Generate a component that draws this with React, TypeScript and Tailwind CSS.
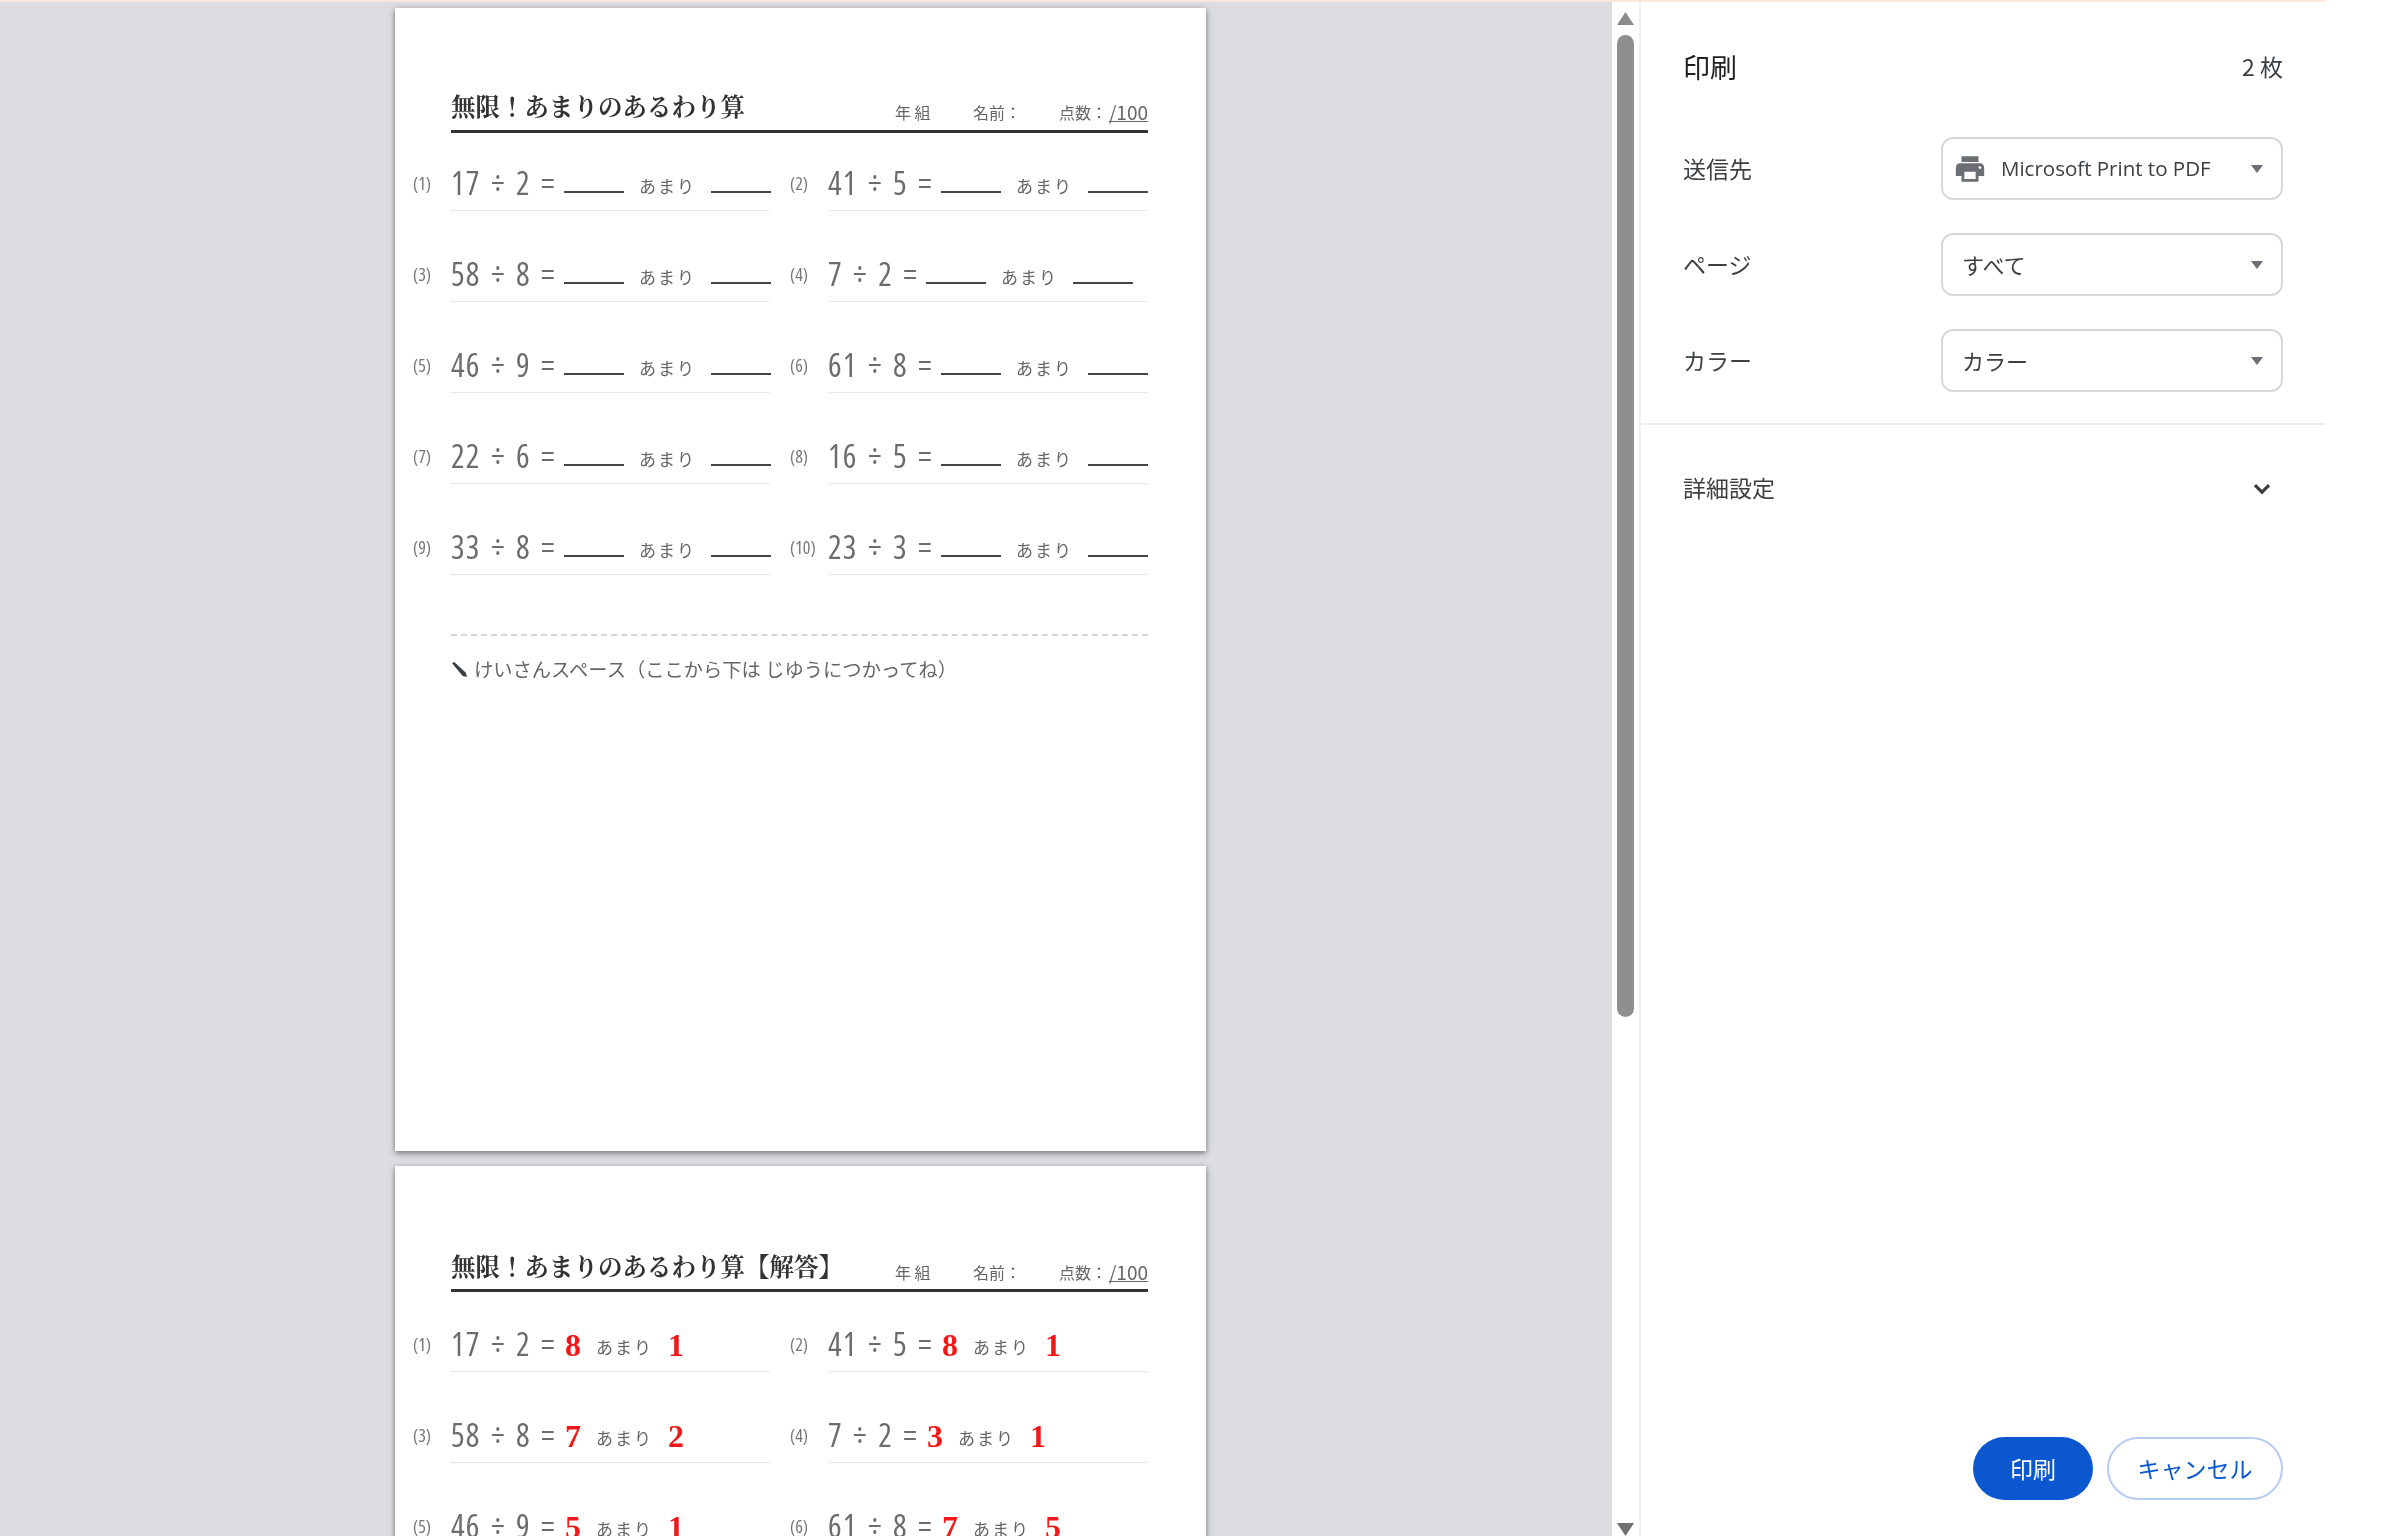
import React from 'react';

const problems = [
  { q: '17 ÷ 2 =', a: '8', r: '1' },
  { q: '41 ÷ 5 =', a: '8', r: '1' },
  { q: '58 ÷ 8 =', a: '7', r: '2' },
  { q: '7 ÷ 2 =', a: '3', r: '1' },
  { q: '46 ÷ 9 =', a: '5', r: '1' },
  { q: '61 ÷ 8 =', a: '7', r: '5' },
  { q: '22 ÷ 6 =', a: '3', r: '4' },
  { q: '16 ÷ 5 =', a: '3', r: '1' },
  { q: '33 ÷ 8 =', a: '4', r: '1' },
  { q: '23 ÷ 3 =', a: '7', r: '2' },
];

function Problem({ index, q, a, r, answers }: { index: number; q: string; a: string; r: string; answers: boolean }) {
  return (
    <div className="flex">
      <div className="w-[38px] pt-[13px] text-[18px] leading-[30px] text-[#777] font-['Open_Sans',sans-serif] font-stretch-condensed">
        ({index})
      </div>
      <div className="w-[319px] h-[56px] pt-[10px] flex items-baseline border-b border-dotted border-[#d4d4d4]">
        <span className="text-[32px] leading-[36px] text-[#6c6c6c] tracking-[1.25px] [word-spacing:3px] whitespace-nowrap font-['Open_Sans',sans-serif] font-stretch-condensed">
          {q}
        </span>
        {answers ? (
          <>
            <span className="ml-[9px] w-[16px] text-[32px] leading-[36px] font-bold text-[#f01818] font-['Liberation_Serif',serif]">{a}</span>
            <span className="ml-[15px] -translate-y-[2px] text-[17px] tracking-[2px] whitespace-nowrap text-[#666]">あまり</span>
            <span className="ml-[15px] text-[32px] leading-[36px] font-bold text-[#f01818] font-['Liberation_Serif',serif]">{r}</span>
          </>
        ) : (
          <>
            <span className="ml-[8px] -translate-y-[2px] inline-block w-[60px] h-0 shrink-0 border-b-2 border-[#444]"></span>
            <span className="ml-[15px] -translate-y-[2px] text-[17px] tracking-[2px] whitespace-nowrap text-[#666]">あまり</span>
            <span className="ml-[15px] -translate-y-[2px] inline-block w-[60px] h-0 shrink-0 border-b-2 border-[#444]"></span>
          </>
        )}
      </div>
    </div>
  );
}

function Page({ title, answers }: { title: string; answers: boolean }) {
  return (
    <div className={answers ? "w-[811px] h-[1143px] shrink-0 bg-white pl-[18px] pt-[81px] shadow-[0_2px_6px_rgba(0,0,0,0.5)]" : "w-[811px] h-[1143px] shrink-0 bg-white pl-[18px] pt-[80px] shadow-[0_2px_6px_rgba(0,0,0,0.5)]"}>
      <div className={answers ? "ml-[38px] w-[697px] h-[45px] flex items-end justify-between pb-[5px] border-b-[3px] border-[#333]" : "ml-[38px] w-[697px] h-[45px] flex items-end justify-between pb-[6px] border-b-[3px] border-[#333]"}>
        <div className="text-[24.5px] leading-[36px] font-bold text-[#333] font-['Noto_Serif_CJK_JP','Noto_Sans_CJK_JP',serif]">{title}</div>
        <div className="mb-[2px] flex items-end text-[16px] leading-[20px] text-[#666]">
          <span className="w-[78px]">年 組</span>
          <span className="w-[86px]">名前：</span>
          <span className="w-[50px]">点数：</span>
          <span className="underline text-[19px] leading-[20px]">/100</span>
        </div>
      </div>
      <div className={answers ? "mt-[24px] grid grid-cols-[357px_357px] gap-x-[20px] gap-y-[35px]" : "mt-[22px] grid grid-cols-[357px_357px] gap-x-[20px] gap-y-[35px]"}>
        {problems.map((p, i) => (
          <Problem key={i} index={i + 1} q={p.q} a={p.a} r={p.r} answers={answers} />
        ))}
      </div>
      {!answers && (
        <>
          <div className="ml-[38px] w-[697px] mt-[59px] border-t-2 border-dashed border-[#d4d4d4]"></div>
          <div className="ml-[38px] mt-[19px] flex items-center gap-[6px] text-[19.3px] leading-[28px] text-[#666]">
            <svg width="17" height="17" viewBox="0 0 16 16">
              <path d="M1 2 L3 1 L14 11 L15 15 L11 14 Z" fill="#3a3f46" />
            </svg>
            <span>けいさんスペース（ここから下は じゆうにつかってね）</span>
          </div>
        </>
      )}
    </div>
  );
}

function Caret() {
  return (
    <svg width="12" height="8" viewBox="0 0 12 8" className="shrink-0">
      <path d="M0 0 H12 L6 8 Z" fill="#6b6f74" />
    </svg>
  );
}

function Field({ label, children }: { label: string; children: React.ReactNode }) {
  return (
    <div className="flex items-center justify-between h-[63px] pr-[42px]">
      <span className="text-[23px] text-[#3c4043]">{label}</span>
      <div className="w-[342px] h-[63px] flex items-center justify-between pl-[19px] pr-[18px] rounded-[12px] border-2 border-[#d8d9dc] bg-white text-[22px] text-[#3c4043]">
        {children}
        <Caret />
      </div>
    </div>
  );
}

export default function App() {
  return (
    <div className="w-[2395px] h-[1536px] overflow-hidden bg-white font-['Noto_Sans_CJK_JP','Noto_Sans',sans-serif] blur-[0.6px]">
      <div className="w-[2325px] h-full flex flex-col border-t-2 border-[#fbe6da]">
        <div className="flex flex-1 min-h-0">
          {/* preview */}
          <div className="w-[1612px] shrink-0 bg-[#dcdde1] pl-[395px] pt-[6px] flex flex-col gap-[15px] overflow-hidden">
            <Page title="無限！あまりのあるわり算" answers={false} />
            <Page title="無限！あまりのあるわり算【解答】" answers={true} />
          </div>

          {/* scrollbar */}
          <div className="w-[27px] shrink-0 flex flex-col items-center pt-[10px]">
            <svg width="17" height="13" viewBox="0 0 17 13">
              <path d="M8.5 0 L17 13 H0 Z" fill="#8b8b8b" />
            </svg>
            <div className="mt-[10px] w-[17px] h-[982px] rounded-full bg-[#8f8f8f]"></div>
            <svg width="17" height="13" viewBox="0 0 17 13" className="mt-auto">
              <path d="M0 0 H17 L8.5 13 Z" fill="#707070" />
            </svg>
          </div>

          {/* settings */}
          <div className="flex-1 flex flex-col border-l-2 border-[#f1f1f1] h-full">
            <div className="pl-[42px] pr-[42px] pt-[41px] flex items-center justify-between h-[88px]">
              <span className="text-[27px] leading-[40px] text-[#202124]">印刷</span>
              <span className="text-[23px] text-[#3c4043]">2 枚</span>
            </div>
            <div className="pl-[42px] mt-[47px] flex flex-col gap-[33px]">
              <Field label="送信先">
                <div className="flex items-center -ml-[9px]">
                  <svg width="34" height="34" viewBox="0 0 24 24" fill="#6b6f74">
                    <path d="M19 8H5c-1.66 0-3 1.34-3 3v6h4v4h12v-4h4v-6c0-1.66-1.34-3-3-3zm-3 11H8v-5h8v5zm3-7c-.55 0-1-.45-1-1s.45-1 1-1 1 .45 1 1-.45 1-1 1zm-1-9H6v4h12V3z" />
                  </svg>
                  <span className="ml-[14px] font-['Open_Sans',sans-serif] text-[20.5px]">Microsoft Print to PDF</span>
                </div>
              </Field>
              <Field label="ページ"><span>すべて</span></Field>
              <Field label="カラー"><span>カラー</span></Field>
            </div>
            <div className="mt-[31px] border-t-2 border-[#ececec]"></div>
            <div className="pl-[42px] pr-[50px] h-[125px] flex items-center justify-between">
              <span className="text-[23px] text-[#3c4043]">詳細設定</span>
              <svg width="26" height="26" viewBox="0 0 24 24" fill="none" stroke="#3c4043" strokeWidth="3" className="mt-[2px]">
                <path d="M5.5 8.5 L12 15 L18.5 8.5" />
              </svg>
            </div>
            <div className="mt-auto pb-[36px] pr-[42px] flex justify-end gap-[14px]">
              <button className="w-[120px] h-[63px] rounded-full bg-[#0b57d0] text-white text-[23px]">印刷</button>
              <button className="w-[176px] h-[63px] rounded-full border-2 border-[#b6ccf2] bg-white text-[#0b57d0] text-[23px]">キャンセル</button>
            </div>
          </div>
        </div>
      </div>
    </div>
  );
}
